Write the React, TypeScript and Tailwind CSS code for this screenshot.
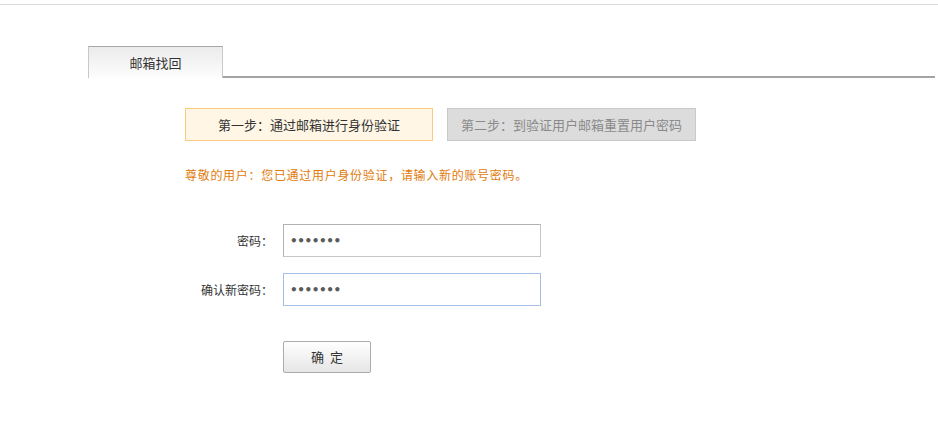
const steps = [
  { label: "第一步：通过邮箱进行身份验证", active: true },
  { label: "第二步：到验证用户邮箱重置用户密码", active: false },
];

const fields = [
  { label: "密码：", value: "1234567", focus: false },
  { label: "确认新密码：", value: "1234567", focus: true },
];

export default function App() {
  return (
    <div className="min-h-[428px] bg-white font-['Noto_Sans_CJK_SC','Noto_Sans',sans-serif] text-[#333]">
      <div className="pt-1">
        <div className="border-t border-[#d9d9d9]" />
      </div>

      <div className="mt-[41px] flex items-end pl-[88px] pr-[3px]">
        <div className="flex h-[32px] w-[135px] items-center justify-center border-x border-t border-x-[#c8c8c8] border-t-[#a8a8a8] bg-gradient-to-b from-[#ebebeb] to-[#fdfdfd] text-[13px] text-[#333]">
          邮箱找回
        </div>
        <div className="flex-1 border-b-2 border-[#a3a3a3]" />
      </div>

      <div className="pl-[185px]">
        <div className="mt-[30px] flex gap-[14px]">
          {steps.map((step) => (
            <div
              key={step.label}
              className={
                step.active
                  ? "flex h-[33px] w-[248px] items-center justify-center border border-[#fbc980] bg-[#fff6e5] text-[13px] text-[#333]"
                  : "flex h-[33px] w-[249px] items-center justify-center border border-[#c9c9c9] bg-[#dcdcdc] text-[13px] text-[#8a8a8a]"
              }
            >
              {step.label}
            </div>
          ))}
        </div>

        <p className="mt-[24px] h-[20px] text-[12px] leading-[20px] tracking-[0.7px] text-[#e27b0c]">
          尊敬的用户：您已通过用户身份验证，请输入新的账号密码。
        </p>

        <div className="mt-[39px] flex flex-col gap-[16px]">
          {fields.map((field) => (
            <div key={field.label} className="flex items-center">
              <label className="w-[88px] text-right text-[12px] text-[#333]">{field.label}</label>
              <input
                type="password"
                defaultValue={field.value}
                autoFocus={field.focus}
                className={
                  field.focus
                    ? "ml-[10px] h-[33px] w-[258px] border border-[#a6bfe9] px-[6px] font-['DejaVu_Sans',sans-serif] text-[12px] font-bold tracking-[-0.4px] text-[#5a5a5a] caret-black outline-none"
                    : "ml-[10px] h-[33px] w-[258px] border border-[#c6c6c6] border-l-[#b3b3b3] border-t-[#b3b3b3] px-[6px] font-['DejaVu_Sans',sans-serif] text-[12px] font-bold tracking-[-0.4px] text-[#5a5a5a] outline-none"
                }
              />
            </div>
          ))}
        </div>

        <button className="ml-[98px] mt-[35px] h-[32px] w-[88px] rounded-[2px] border border-[#ababab] bg-gradient-to-b from-white to-[#e6e6e6] text-[13px] text-[#333]">
          确&nbsp;&nbsp;定
        </button>
      </div>
    </div>
  );
}
